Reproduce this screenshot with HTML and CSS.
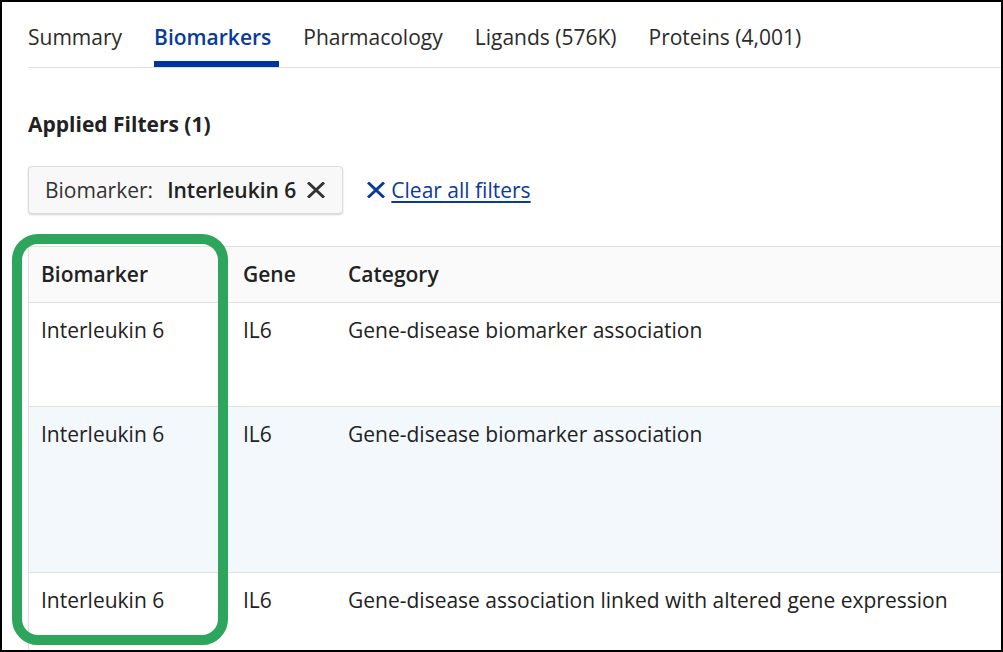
FILE: index.html
```html
<!DOCTYPE html>
<html lang="en">
<head>
    <meta charset="UTF-8">
    <meta name="viewport" content="width=device-width, initial-scale=1.0">
    <title>Biomarkers</title>
    <link rel="stylesheet" href="styles.css">
</head>
<body>
    <div class="frame">
        <nav class="tabs">
            <a class="tab">Summary</a>
            <a class="tab active">Biomarkers</a>
            <a class="tab">Pharmacology</a>
            <a class="tab">Ligands (576K)</a>
            <a class="tab">Proteins (4,001)</a>
        </nav>

        <h3 class="filters-title">Applied Filters (1)</h3>

        <div class="filter-bar">
            <div class="chip">
                <span class="chip-label">Biomarker:</span>
                <span class="chip-value">Interleukin 6</span>
                <svg class="chip-x" width="18" height="16" viewBox="0 0 18 16">
                    <path d="M1 0.5 L17 15.5 M17 0.5 L1 15.5" stroke="#333" stroke-width="3" fill="none"/>
                </svg>
            </div>
            <a class="clear-link">
                <svg width="18" height="16" viewBox="0 0 18 16">
                    <path d="M1 0.5 L17 15.5 M17 0.5 L1 15.5" stroke="#0a3a9e" stroke-width="3" fill="none"/>
                </svg>
                <span>Clear all filters</span>
            </a>
        </div>

        <div class="table">
            <div class="row head">
                <div class="cell">Biomarker</div>
                <div class="cell">Gene</div>
                <div class="cell">Category</div>
            </div>
            <div class="row short">
                <div class="cell">Interleukin 6</div>
                <div class="cell">IL6</div>
                <div class="cell">Gene-disease biomarker association</div>
            </div>
            <div class="row tall alt">
                <div class="cell">Interleukin 6</div>
                <div class="cell">IL6</div>
                <div class="cell">Gene-disease biomarker association</div>
            </div>
            <div class="row last">
                <div class="cell">Interleukin 6</div>
                <div class="cell">IL6</div>
                <div class="cell">Gene-disease association linked with altered gene expression</div>
            </div>
        </div>

        <div class="highlight"></div>
    </div>
</body>
</html>
```

FILE: styles.css
```css
* {
    box-sizing: border-box;
}
body {
    margin: 0;
    font-family: "Open Sans", "Noto Sans", sans-serif;
    color: #222;
    background: #fff;
}
.frame {
    position: relative;
    width: 1003px;
    height: 652px;
    border: 2px solid #000;
    overflow: hidden;
    padding: 21px 0 0 26px;
}
.tabs {
    display: flex;
    gap: 24px;
    border-bottom: 1px solid #e0e0e0;
}
.tab {
    font-size: 21px;
    line-height: 28px;
    padding: 0 8px 10px 0;
    border-bottom: 6px solid transparent;
    color: #2b2b2b;
}
.tab.active {
    color: #0a3a9e;
    font-weight: 600;
    border-bottom-color: #0033a0;
}
.filters-title {
    margin: 42px 0 0;
    font-size: 21px;
    line-height: 28px;
    font-weight: 700;
}
.filter-bar {
    display: flex;
    align-items: center;
    gap: 24px;
    margin-top: 28px;
}
.chip {
    display: flex;
    align-items: center;
    height: 48px;
    padding: 0 17px 0 16px;
    background: #f8f8f8;
    border: 1px solid #dcdcdc;
    border-radius: 4px;
    box-shadow: 0 1px 2px rgba(0, 0, 0, 0.18);
    font-size: 21px;
    line-height: 28px;
}
.chip-label {
    color: #333;
    margin-right: 14px;
}
.chip-value {
    font-weight: 600;
    margin-right: 11px;
}
.clear-link {
    display: flex;
    align-items: center;
    gap: 6px;
    font-size: 21px;
    line-height: 28px;
    color: #0a3a9e;
}
.clear-link span {
    text-decoration: underline;
    text-underline-offset: 3px;
}
.table {
    margin-top: 32px;
    width: 1100px;
    border-top: 1px solid #e0e0e0;
    border-left: 1px solid #e0e0e0;
    font-size: 21px;
    line-height: 28px;
}
.row {
    display: grid;
    grid-template-columns: 202px 105px 1fr;
    border-bottom: 1px solid #e0e0e0;
    height: 56px;
}
.row.head {
    background: #fafafa;
    font-weight: 600;
}
.row.short {
    height: 104px;
}
.row.tall {
    height: 166px;
}
.row.last {
    height: 104px;
}
.row.alt {
    background: #f3f8fd;
}
.cell {
    padding: 13px 12px 0;
}
.highlight {
    position: absolute;
    left: 10px;
    top: 232px;
    width: 216px;
    height: 411px;
    border: 10px solid #2ea55c;
    border-radius: 26px;
}
```
